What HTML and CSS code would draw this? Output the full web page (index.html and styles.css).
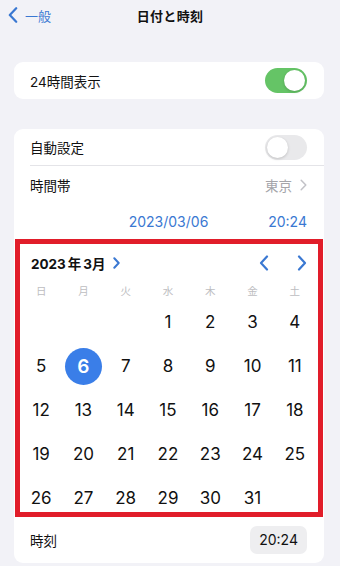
FILE: index.html
```html
<!DOCTYPE html>
<html lang="ja">
<head>
<meta charset="utf-8">
<link rel="stylesheet" href="styles.css">
</head>
<body>
<div class="screen">
  <header class="nav">
    <a class="back">
      <svg class="back-icon" width="10" height="16" viewBox="0 0 10 16"><path d="M8.2 1.2 L1.8 8 L8.2 14.8" fill="none" stroke="#3a78d2" stroke-width="2.2" stroke-linecap="round" stroke-linejoin="round"/></svg>
      <span>一般</span>
    </a>
    <h1 class="title">日付と時刻</h1>
    <span></span>
  </header>

  <section class="card card-single">
    <div class="row row-24">
      <span class="label">24時間表示</span>
      <span class="switch switch-on"><span class="knob"></span></span>
    </div>
  </section>

  <section class="card card-main">
    <div class="row row-auto">
      <span class="label">自動設定</span>
      <span class="switch switch-off"><span class="knob"></span></span>
    </div>
    <div class="sep"></div>
    <div class="row row-tz">
      <span class="label">時間帯</span>
      <span class="value">東京<svg class="chev" width="7" height="12" viewBox="0 0 7 12"><path d="M1.2 1.2 L5.8 6 L1.2 10.8" fill="none" stroke="#c2c2c7" stroke-width="1.5" stroke-linecap="round" stroke-linejoin="round"/></svg></span>
    </div>
    <div class="row row-dt">
      <span></span>
      <span class="blue date">2023/03/06</span>
      <span class="blue time">20:24</span>
    </div>

    <div class="calendar">
      <div class="cal-head">
        <span class="month"><span>2023<span class="kanji">年</span>3月</span><svg class="month-chev" width="7" height="12" viewBox="0 0 7 12"><path d="M1.3 1.3 L5.7 6 L1.3 10.7" fill="none" stroke="#3a78d2" stroke-width="2" stroke-linecap="round" stroke-linejoin="round"/></svg></span>
        <span class="arrows">
          <svg width="10" height="16" viewBox="0 0 10 16"><path d="M8 1.5 L2 8 L8 14.5" fill="none" stroke="#3a78d2" stroke-width="2.2" stroke-linecap="round" stroke-linejoin="round"/></svg>
          <svg width="10" height="16" viewBox="0 0 10 16"><path d="M2 1.5 L8 8 L2 14.5" fill="none" stroke="#3a78d2" stroke-width="2.2" stroke-linecap="round" stroke-linejoin="round"/></svg>
        </span>
      </div>
      <div class="weekdays">
        <span>日</span><span>月</span><span>火</span><span>水</span><span>木</span><span>金</span><span>土</span>
      </div>
      <div class="days">
        <span></span><span></span><span></span><span>1</span><span>2</span><span>3</span><span>4</span>
        <span>5</span><span class="selected"><b>6</b></span><span>7</span><span>8</span><span>9</span><span>10</span><span>11</span>
        <span>12</span><span>13</span><span>14</span><span>15</span><span>16</span><span>17</span><span>18</span>
        <span>19</span><span>20</span><span>21</span><span>22</span><span>23</span><span>24</span><span>25</span>
        <span>26</span><span>27</span><span>28</span><span>29</span><span>30</span><span>31</span><span></span>
      </div>
    </div>

    <div class="row row-time">
      <span class="label">時刻</span>
      <span class="pill">20:24</span>
    </div>
  </section>
</div>
</body>
</html>
```

FILE: styles.css
```css
* { box-sizing: border-box; }
html, body { margin: 0; padding: 0; }
body {
  background: #f2f2f7;
  font-family: Inter, "Noto Sans CJK JP", sans-serif;
  color: #111;
  width: 340px;
  height: 566px;
  overflow: hidden;
}
.screen {
  display: flex;
  flex-direction: column;
  padding: 0 16px 0 14px;
}
.nav {
  display: grid;
  grid-template-columns: 1fr auto 1fr;
  align-items: center;
  height: 30px;
  margin: 0 -16px 0 -14px;
  padding: 0 8px;
}
.back {
  display: flex;
  align-items: center;
  gap: 7px;
  color: #3a78d2;
  font-size: 13px;
}
.back-icon { display: block; }
.title {
  margin: 0;
  font-size: 13px;
  font-weight: 600;
  letter-spacing: 0.3px;
}
.card {
  background: #fff;
  border-radius: 9px;
  width: 310px;
}
.card-single { margin-top: 32px; }
.card-main { margin-top: 30px; }
.row {
  display: flex;
  align-items: center;
  justify-content: space-between;
  padding: 0 17px 0 16px;
  font-size: 13.5px;
}
.row-24 { height: 37px; }
.row-auto { height: 36px; }
.sep {
  height: 1px;
  background: #e4e4e8;
  margin-left: 16px;
}
.row-tz { height: 38px; }
.value {
  display: flex;
  align-items: center;
  gap: 8px;
  color: #a5a5aa;
}
.chev { display: block; }
.row-dt {
  display: grid;
  grid-template-columns: 1fr auto 1fr;
  height: 35px;
  padding-bottom: 1px;
}
.blue { color: #3a78d2; font-size: 14px; }
.time { justify-self: end; }
.switch {
  display: flex;
  align-items: center;
  width: 42px;
  height: 25px;
  border-radius: 13px;
  padding: 2px;
}
.switch-on { background: #65c466; justify-content: flex-end; }
.switch-off { background: #e9e9eb; justify-content: flex-start; }
.knob {
  width: 21px;
  height: 21px;
  border-radius: 50%;
  background: #fff;
  box-shadow: 0 1px 3px rgba(0,0,0,0.18);
}
.calendar {
  margin: 0 1px;
  border: 5px solid #e11d2a;
  display: flex;
  flex-direction: column;
}
.cal-head {
  display: flex;
  align-items: center;
  justify-content: space-between;
  height: 36px;
  padding: 2px 11px 0 11px;
}
.month {
  display: flex;
  align-items: center;
  gap: 7px;
  font-size: 13.5px;
  font-weight: 700;
}
.kanji { margin: 0 2px; }
.month-chev { display: block; }
.arrows {
  display: flex;
  align-items: center;
  gap: 28px;
}
.arrows svg { display: block; }
.weekdays {
  display: grid;
  grid-template-columns: repeat(7, 1fr);
  height: 20px;
  align-items: center;
  padding-right: 2px;
  font-size: 10.5px;
  color: #bdbdc1;
  text-align: center;
}
.days {
  display: grid;
  grid-template-columns: repeat(7, 1fr);
  grid-auto-rows: 44px;
  margin-bottom: -8px;
  padding-right: 2px;
  font-size: 17px;
  text-align: center;
}
.days span {
  display: flex;
  align-items: center;
  justify-content: center;
}
.selected b {
  display: flex;
  align-items: center;
  justify-content: center;
  width: 37px;
  height: 37px;
  border-radius: 50%;
  background: #3a7ee8;
  color: #fff;
  font-weight: 600;
  font-size: 19px;
}
.row-time { height: 46px; }
.pill {
  background: #eeeef0;
  border-radius: 7px;
  padding: 0 9px;
  height: 28px;
  line-height: 28px;
  font-size: 14px;
}
```
